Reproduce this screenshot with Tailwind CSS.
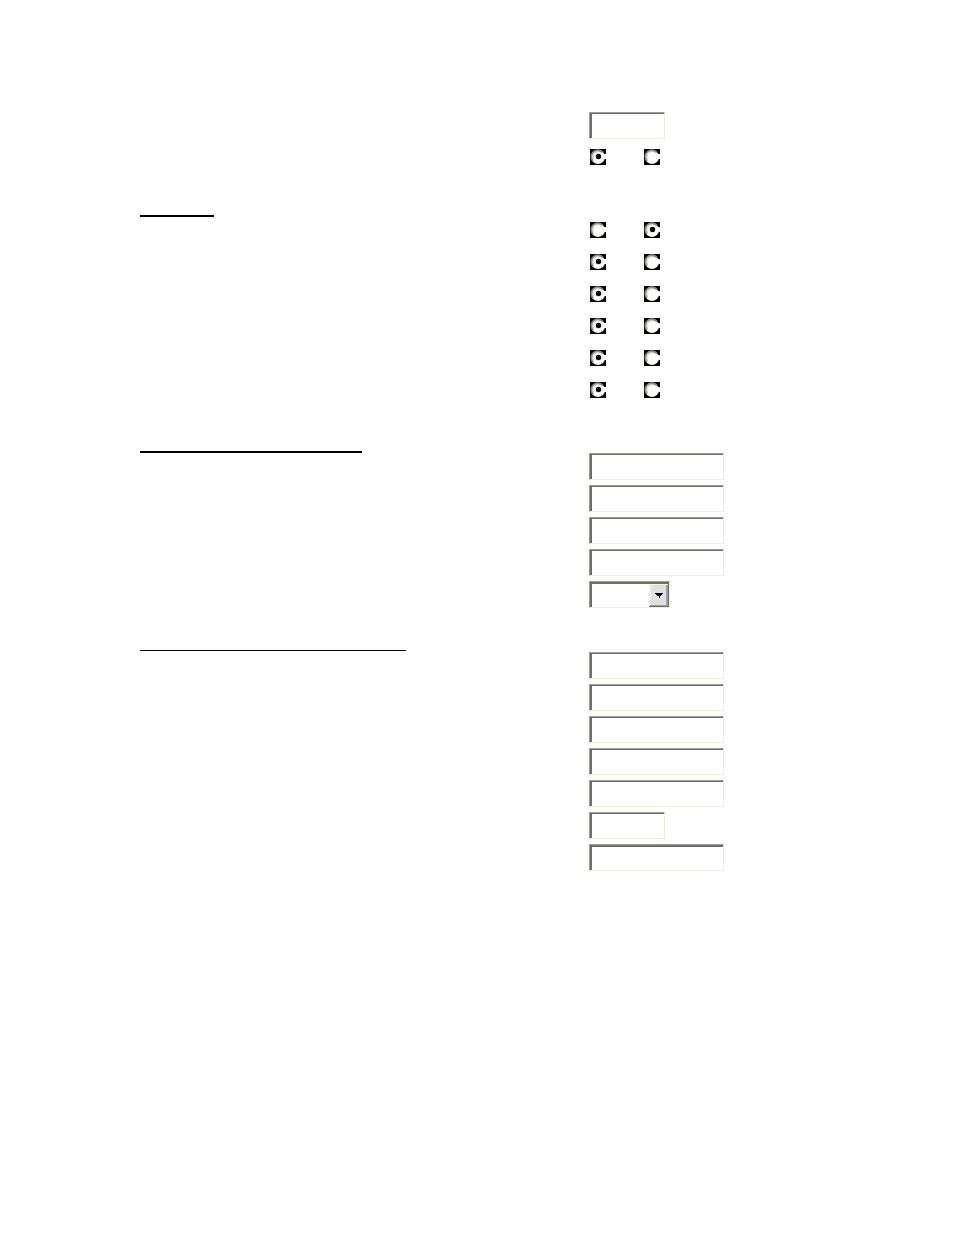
<!DOCTYPE html>
<html lang="en">
<head>
  <title>Settings</title>
  <meta charset="UTF-8" />
  <meta name="viewport" content="width=device-width, initial-scale=1" />
  <script src="https://cdn.jsdelivr.net/npm/@tailwindcss/browser@4"></script>
</head>
<body class="min-h-screen bg-white text-black font-['Liberation_Sans',sans-serif]">

  <!-- Shared radio artwork -->
  <svg class="hidden" xmlns="http://www.w3.org/2000/svg">
    <symbol id="radio" viewBox="0 0 16 16">
      <path fill="#000" d="M0 0h16v16H0z"/>
      <circle cx="8" cy="8" r="7" fill="#f4f3ec"/>
      <path d="M13 5h3v5h-3z" fill="#fff"/>
      <path d="M3 12A6.4 6.4 0 0 1 12.6 3.4" fill="none" stroke="#8c8c8a" stroke-width="1.8"/>
      <path d="M3.8 10.8A5.3 5.3 0 0 1 11.4 3.9" fill="none" stroke="#c4c4be" stroke-width="1"/>
      <circle cx="8.6" cy="8.2" r="5.2" fill="#fff"/>
    </symbol>
    <symbol id="radio-dot" viewBox="0 0 16 16">
      <circle cx="8.5" cy="7.5" r="2.7" fill="#000"/>
    </symbol>
  </svg>

  <form id="settings-form" class="pt-28 px-[140px]">

    <!-- General -->
    <section class="flex">
      <div class="flex-1"></div>
      <div class="w-[225px] flex flex-col gap-2.5">
        <input type="text" aria-label="Value" class="w-[76px] h-[27px] px-1 text-sm bg-white border border-t-[#9c9ca2] border-l-[#9c9ca2] border-r-[#f0eddf] border-b-[#f0eddf] shadow-[inset_2px_1px_0_#6e7064] outline-none">
        <div class="flex gap-[38px] pl-px" role="radiogroup" aria-label="Value enabled">
          <label class="relative size-4">
            <input type="radio" name="general" aria-label="Yes" class="peer absolute inset-0 size-4 opacity-0" checked>
            <svg class="size-4"><use href="#radio"/></svg>
            <svg class="absolute inset-0 size-4 hidden peer-checked:block"><use href="#radio-dot"/></svg>
          </label>
          <label class="relative size-4">
            <input type="radio" name="general" aria-label="No" class="peer absolute inset-0 size-4 opacity-0">
            <svg class="size-4"><use href="#radio"/></svg>
            <svg class="absolute inset-0 size-4 hidden peer-checked:block"><use href="#radio-dot"/></svg>
          </label>
        </div>
      </div>
    </section>

    <!-- Options -->
    <section class="flex mt-[50px]">
      <div class="flex-1"><hr class="w-[74px] border-t-2 border-black"></div>
      <div id="options" class="w-[225px] flex flex-col gap-4 pt-[7px] pl-px"></div>
    </section>

    <!-- First group of fields -->
    <section class="flex mt-[53px]">
      <div class="flex-1"><hr class="w-[222px] border-t-2 border-black"></div>
      <div class="w-[225px] flex flex-col gap-[5px] pt-0.5">
        <input type="text" aria-label="Field 1" class="w-[135px] h-[27px] px-1 text-sm bg-white border border-t-[#9c9ca2] border-l-[#9c9ca2] border-r-[#f0eddf] border-b-[#f0eddf] shadow-[inset_2px_1px_0_#6e7064] outline-none">
        <input type="text" aria-label="Field 2" class="w-[135px] h-[27px] px-1 text-sm bg-white border border-t-[#9c9ca2] border-l-[#9c9ca2] border-r-[#f0eddf] border-b-[#f0eddf] shadow-[inset_2px_1px_0_#6e7064] outline-none">
        <input type="text" aria-label="Field 3" class="w-[135px] h-[27px] px-1 text-sm bg-white border border-t-[#9c9ca2] border-l-[#9c9ca2] border-r-[#f0eddf] border-b-[#f0eddf] shadow-[inset_2px_1px_0_#6e7064] outline-none">
        <input type="text" aria-label="Field 4" class="w-[135px] h-[27px] px-1 text-sm bg-white border border-t-[#9c9ca2] border-l-[#9c9ca2] border-r-[#f0eddf] border-b-[#f0eddf] shadow-[inset_2px_1px_0_#6e7064] outline-none">
        <div class="relative w-[81px] h-[27px]">
          <select aria-label="Field 5" class="block appearance-none w-full h-full px-1 text-sm bg-white border border-t-[#9c9ca2] border-l-[#9c9ca2] border-r-[#f0eddf] border-b-[#f0eddf] shadow-[inset_2px_2px_0_#6e7064] outline-none">
            <option value=""></option>
          </select>
          <!-- Drop-down button -->
          <svg class="absolute top-[3px] right-px w-5 h-[23px] pointer-events-none" viewBox="0 0 20 23" shape-rendering="crispEdges">
            <path fill="#f2efe3" d="M0 0h20v23H0z"/>
            <path fill="#e0dfe3" d="M2 1h16v20H2z"/>
            <path fill="#9d9da3" d="M17 1h2v21H1v-1h16z"/>
            <path fill="#6e7064" d="M19 0h1v23H0v-1h19z"/>
            <path fill="#000" d="M6 9h8v1h-1v1h-1v1h-1v2h-1v-2H8v-1H7v-1H6z"/>
          </svg>
        </div>
      </div>
    </section>

    <!-- Second group of fields -->
    <section class="flex mt-[42px]">
      <div class="flex-1"><hr class="w-[266px] border-t border-black"></div>
      <div class="w-[225px] flex flex-col gap-[5px] pt-0.5">
        <input type="text" aria-label="Field 6" class="w-[135px] h-[27px] px-1 text-sm bg-white border border-t-[#9c9ca2] border-l-[#9c9ca2] border-r-[#f0eddf] border-b-[#f0eddf] shadow-[inset_2px_1px_0_#6e7064] outline-none">
        <input type="text" aria-label="Field 7" class="w-[135px] h-[27px] px-1 text-sm bg-white border border-t-[#9c9ca2] border-l-[#9c9ca2] border-r-[#f0eddf] border-b-[#f0eddf] shadow-[inset_2px_1px_0_#6e7064] outline-none">
        <input type="text" aria-label="Field 8" class="w-[135px] h-[27px] px-1 text-sm bg-white border border-t-[#9c9ca2] border-l-[#9c9ca2] border-r-[#f0eddf] border-b-[#f0eddf] shadow-[inset_2px_1px_0_#6e7064] outline-none">
        <input type="text" aria-label="Field 9" class="w-[135px] h-[27px] px-1 text-sm bg-white border border-t-[#9c9ca2] border-l-[#9c9ca2] border-r-[#f0eddf] border-b-[#f0eddf] shadow-[inset_2px_1px_0_#6e7064] outline-none">
        <input type="text" aria-label="Field 10" class="w-[135px] h-[27px] px-1 text-sm bg-white border border-t-[#9c9ca2] border-l-[#9c9ca2] border-r-[#f0eddf] border-b-[#f0eddf] shadow-[inset_2px_1px_0_#6e7064] outline-none">
        <input type="text" aria-label="Field 11" class="w-[76px] h-[27px] px-1 text-sm bg-white border border-t-[#9c9ca2] border-l-[#9c9ca2] border-r-[#f0eddf] border-b-[#f0eddf] shadow-[inset_2px_1px_0_#6e7064] outline-none">
        <input type="text" aria-label="Field 12" class="w-[135px] h-[27px] px-1 text-sm bg-white border border-t-[#9c9ca2] border-l-[#9c9ca2] border-r-[#f0eddf] border-b-[#f0eddf] shadow-[inset_2px_2px_0_#6e7064] outline-none">
      </div>
    </section>
  </form>

  <script>
    // Each option is a yes/no pair; only the first one starts on "no"
    const options = [false, true, true, true, true, true];

    const radio = (name, label, checked) => `
      <label class="relative size-4">
        <input type="radio" name="${name}" aria-label="${label}" class="peer absolute inset-0 size-4 opacity-0" ${checked ? "checked" : ""}>
        <svg class="size-4"><use href="#radio"/></svg>
        <svg class="absolute inset-0 size-4 hidden peer-checked:block"><use href="#radio-dot"/></svg>
      </label>`;

    document.getElementById("options").innerHTML = options.map((on, i) => `
      <div class="flex gap-[38px]" role="radiogroup" aria-label="Option ${i + 1}">
        ${radio("option" + i, "Yes", on)}
        ${radio("option" + i, "No", !on)}
      </div>`).join("");
  </script>
</body>
</html>
